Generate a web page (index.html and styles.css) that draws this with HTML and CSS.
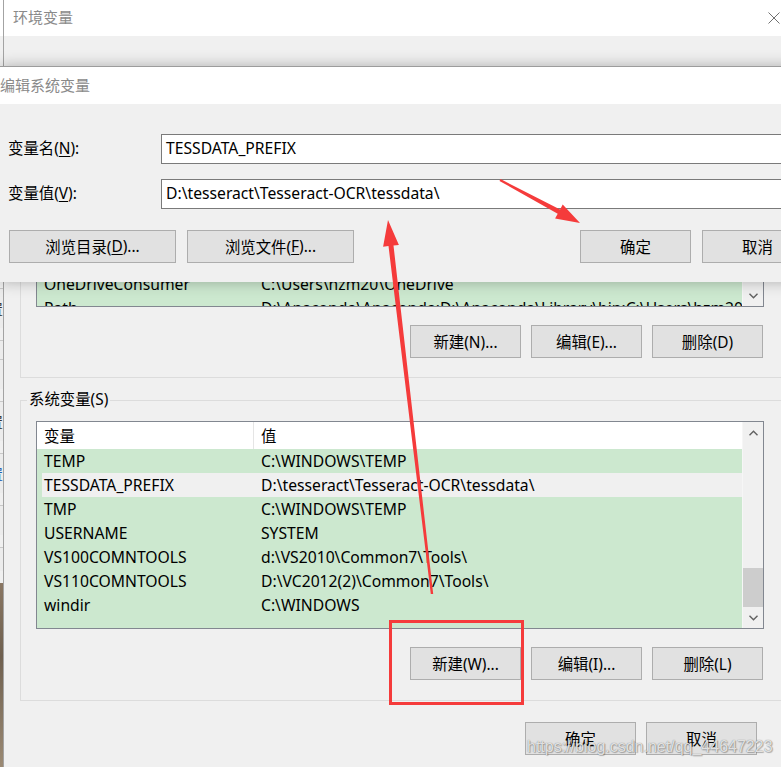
FILE: index.html
```html
<!DOCTYPE html>
<html lang="zh-CN">
<head>
<meta charset="utf-8">
<title>编辑系统变量</title>
<link rel="stylesheet" href="styles.css">
</head>
<body>
<div class="screen">
  <div class="behind">
    <div class="bh-title"></div>
    <div class="bh-fill"></div>
    <div class="bh-cell"><span class="bh-glyph">置</span></div>
    <div class="bh-cell short"></div>
    <div class="bh-cell mid"></div>
    <div class="bh-cell"><span class="bh-glyph">置</span></div>
    <div class="bh-cell"><span class="bh-glyph blue">置</span></div>
    <div class="bh-cell mid"></div>
    <div class="bh-cell last"></div>
    <div class="bh-photo"></div>
  </div>

  <div class="env">
    <div class="env-title">
      <span class="env-title-text">环境变量</span>
      <svg class="close" width="12" height="12" viewBox="0 0 12 12"><path d="M0.5 0.5L11.5 11.5M11.5 0.5L0.5 11.5" stroke="#707070" stroke-width="1" fill="none"/></svg>
    </div>
    <div class="env-body">
      <fieldset class="group user">
        <legend>用户变量(U)</legend>
        <div class="list user-list">
          <div class="rows">
            <div class="row head"><span class="c1">变量</span><span class="c2">值</span></div>
            <div class="row"><span class="c1">ChocolateyLastPathUpdate</span><span class="c2">132288513069780574</span></div>
            <div class="row"><span class="c1">OneDrive</span><span class="c2">C:\Users\hzm20\OneDrive</span></div>
            <div class="row"><span class="c1">OneDriveConsumer</span><span class="c2">C:\Users\hzm20\OneDrive</span></div>
            <div class="row"><span class="c1">Path</span><span class="c2">D:\Anaconda\Anaconda;D:\Anaconda\Library\bin;C:\Users\hzm20\AppData</span></div>
          </div>
          <div class="scrollbar">
            <div class="sb-track"></div>
            <div class="sb-btn"><svg width="9" height="6" viewBox="0 0 9 6"><path d="M0.5 0.8L4.5 4.8L8.5 0.8" stroke="#606060" stroke-width="1.4" fill="none"/></svg></div>
          </div>
        </div>
        <div class="btn-row">
          <button class="btn">新建(N)...</button>
          <button class="btn">编辑(E)...</button>
          <button class="btn">删除(D)</button>
        </div>
      </fieldset>

      <fieldset class="group system">
        <legend>系统变量(S)</legend>
        <div class="list sys-list">
          <div class="rows">
            <div class="row head"><span class="c1">变量</span><span class="c2">值</span></div>
            <div class="row"><span class="c1">TEMP</span><span class="c2">C:\WINDOWS\TEMP</span></div>
            <div class="row sel"><span class="c1">TESSDATA_PREFIX</span><span class="c2">D:\tesseract\Tesseract-OCR\tessdata\</span></div>
            <div class="row"><span class="c1">TMP</span><span class="c2">C:\WINDOWS\TEMP</span></div>
            <div class="row"><span class="c1">USERNAME</span><span class="c2">SYSTEM</span></div>
            <div class="row"><span class="c1">VS100COMNTOOLS</span><span class="c2">d:\VS2010\Common7\Tools\</span></div>
            <div class="row"><span class="c1">VS110COMNTOOLS</span><span class="c2">D:\VC2012(2)\Common7\Tools\</span></div>
            <div class="row"><span class="c1">windir</span><span class="c2">C:\WINDOWS</span></div>
          </div>
          <div class="scrollbar">
            <div class="sb-btn"><svg width="9" height="6" viewBox="0 0 9 6"><path d="M0.5 5.2L4.5 1.2L8.5 5.2" stroke="#606060" stroke-width="1.4" fill="none"/></svg></div>
            <div class="sb-track"><div class="sb-thumb"></div></div>
            <div class="sb-btn"><svg width="9" height="6" viewBox="0 0 9 6"><path d="M0.5 0.8L4.5 4.8L8.5 0.8" stroke="#606060" stroke-width="1.4" fill="none"/></svg></div>
          </div>
        </div>
        <div class="btn-row">
          <button class="btn">新建(W)...</button>
          <button class="btn">编辑(I)...</button>
          <button class="btn">删除(L)</button>
        </div>
      </fieldset>

      <div class="footer">
        <button class="btn">确定</button>
        <button class="btn">取消</button>
      </div>
    </div>
  </div>

  <div class="dialog">
    <div class="dlg-title">编辑系统变量</div>
    <div class="dlg-body">
      <div class="form">
        <label class="lbl">变量名(<u>N</u>):</label>
        <div class="input">TESSDATA_PREFIX</div>
        <label class="lbl">变量值(<u>V</u>):</label>
        <div class="input">D:\tesseract\Tesseract-OCR\tessdata\</div>
      </div>
      <div class="dlg-buttons">
        <button class="btn wide">浏览目录(<u>D</u>)...</button>
        <button class="btn wide">浏览文件(<u>F</u>)...</button>
        <button class="btn push">确定</button>
        <button class="btn">取消</button>
      </div>
    </div>
  </div>

  <svg class="annot" width="781" height="767" viewBox="0 0 781 767">
    <polygon fill="#f53b3b" points="433.2,593.9 393.5,245.5 398.9,244.9 388,220 383.1,246.7 388.5,246.1 430.8,594.1"/>
    <polygon fill="#f53b3b" points="500.5,179.1 560.1,209.4 562.7,204.6 580,223 555.1,218.6 557.7,213.8 499.5,180.9"/>
    <rect x="390.5" y="621.5" width="132" height="82" fill="none" stroke="#f53b3b" stroke-width="3"/>
  </svg>

  <div class="watermark">https://blog.csdn.net/qq_44647223</div>
</div>
</body>
</html>
```

FILE: styles.css
```css
* { box-sizing: border-box; }
html, body { margin: 0; padding: 0; }
body {
  width: 781px;
  height: 767px;
  overflow: hidden;
  background: #f0f0f0;
  font-family: "Noto Sans", "Noto Sans CJK SC", sans-serif;
  font-size: 15px;
  color: #000;
}
.screen {
  position: relative;
  width: 781px;
  height: 767px;
  overflow: hidden;
  display: flex;
}

/* window peeking behind on the far left */
.behind {
  width: 3px;
  flex: none;
  display: flex;
  flex-direction: column;
  background: #f0f0f0;
}
.bh-title { height: 36px; background: #fff; flex: none; }
.bh-fill { height: 252px; flex: none; }
.bh-cell {
  height: 40px;
  flex: none;
  border-top: 1px solid #c8c8c8;
  display: flex;
  justify-content: flex-end;
  align-items: center;
  overflow: hidden;
  background: #ececec;
  margin-bottom: 12px;
}
.bh-cell.short { height: 19px; margin-bottom: 0; }
.bh-cell.mid { height: 30px; }
.bh-cell.last { height: 24px; }
.bh-glyph { font-size: 15px; line-height: 16px; color: #333; flex: none; }
.bh-glyph.blue { color: #1b5fb4; }
.bh-photo {
  flex: 1;
  background: linear-gradient(#8a7763, #6f604f 40%, #9b8a74);
}

/* background window */
.env {
  flex: none;
  width: 800px;
  height: 767px;
  border-left: 1px solid #a3a3a3;
  background: #f0f0f0;
  display: flex;
  flex-direction: column;
}
.env-title {
  height: 36px;
  flex: none;
  background: #fff;
  display: flex;
  align-items: center;
  padding: 0 0 3px 9px;
}
.env-title-text { color: #8a8a8a; font-size: 15px; }
.close { margin-left: auto; margin-right: 23px; margin-top: 3px; }

.env-body {
  padding-left: 16px;
  display: flex;
  flex-direction: column;
}
.group {
  margin: 0;
  padding: 0 0 20px 0;
  border: 1px solid #dcdcdc;
  width: 780px;
  min-width: 0;
}
.group legend {
  margin-left: 6px;
  padding: 0 2px;
  font-size: 15.4px;
  line-height: 20px;
  color: #000;
}
.group.user { margin-top: 129px; padding-bottom: 19px; }
.group.system { margin-top: 12px; }

.list {
  margin: 11px 0 0 15px;
  width: 728px;
  border: 1px solid #828790;
  display: flex;
  background: #cce8cf;
  overflow: hidden;
}
.user-list { height: 111px; }
.sys-list { height: 208px; }
.rows {
  width: 705px;
  flex: none;
  display: flex;
  flex-direction: column;
  overflow: hidden;
}
.row {
  height: 24px;
  flex: none;
  display: flex;
  align-items: center;
  white-space: nowrap;
  font-size: 15.7px;
}
.row .c1 { width: 217px; flex: none; padding-left: 7px; }
.row .c2 { padding-left: 7px; }
.row.head { height: 27px; background: #fff; align-items: stretch; font-size: 15.4px; }
.row.head span { display: flex; align-items: center; }
.row.head .c1 { border-right: 1px solid #e5e5e5; }
.row.sel { background: linear-gradient(to right, #cce8cf 5px, #f0f0f0 5px); }

.scrollbar {
  width: 21px;
  flex: none;
  background: #f0f0f0;
  border-left: 1px solid #f6f6f6;
  display: flex;
  flex-direction: column;
}
.sb-btn {
  height: 21px;
  flex: none;
  display: flex;
  align-items: center;
  justify-content: center;
}
.sb-track {
  flex: 1;
  display: flex;
  flex-direction: column;
  justify-content: flex-end;
}
.sb-thumb { height: 39px; background: #cdcdcd; }

.btn-row {
  margin: 18px 0 0 15px;
  width: 728px;
  display: flex;
  justify-content: flex-end;
  gap: 10px;
  padding-right: 1px;
}
.btn {
  width: 111px;
  height: 33px;
  flex: none;
  background: #e1e1e1;
  border: 1px solid #adadad;
  border-radius: 0;
  font-family: "Noto Sans", "Noto Sans CJK SC", sans-serif;
  font-size: 15.4px;
  color: #000;
  padding: 0;
  display: flex;
  align-items: center;
  justify-content: center;
}
.btn u { text-underline-offset: 2px; }

.footer {
  margin-top: 21px;
  width: 737px;
  display: flex;
  justify-content: flex-end;
  gap: 10px;
}

/* edit dialog on top */
.dialog {
  position: absolute;
  top: 66px;
  left: 0;
  width: 820px;
  height: 216px;
  border-top: 1px solid #9c9c9c;
  background: #f0f0f0;
  box-shadow: 0 0 14px rgba(0, 0, 0, 0.28);
  display: flex;
  flex-direction: column;
}
.dlg-title {
  height: 37px;
  flex: none;
  background: #fff;
  display: flex;
  align-items: center;
  padding-bottom: 2px;
  color: #8a8a8a;
  font-size: 15px;
}
.dlg-body {
  flex: 1;
  padding: 30px 7px 0 8px;
  display: flex;
  flex-direction: column;
}
.form {
  display: grid;
  grid-template-columns: 153px 1fr;
  grid-auto-rows: 30px;
  row-gap: 15px;
  align-items: center;
}
.lbl { font-size: 15.4px; padding-bottom: 3px; }
.lbl u { text-underline-offset: 2px; }
.input {
  height: 30px;
  border: 1px solid #7a7a7a;
  background: #fff;
  padding: 0 0 2px 4px;
  display: flex;
  align-items: center;
  font-size: 15.7px;
  white-space: nowrap;
}
.dlg-buttons {
  margin: 21px 0 0 1px;
  display: flex;
  gap: 11px;
}
.btn.wide { width: 167px; }
.btn.push { margin-left: auto; }

/* annotations */
.annot {
  position: absolute;
  left: 0;
  top: 0;
  pointer-events: none;
}
.watermark {
  position: absolute;
  left: 527px;
  top: 737px;
  font-family: "Liberation Sans", Arial, sans-serif;
  font-size: 16px;
  line-height: 20px;
  color: rgba(255, 255, 255, 0.8);
  text-shadow: 0 0 1px rgba(90, 90, 90, 0.9), 1px 1px 1px rgba(0, 0, 0, 0.25);
  white-space: nowrap;
  pointer-events: none;
}
```
